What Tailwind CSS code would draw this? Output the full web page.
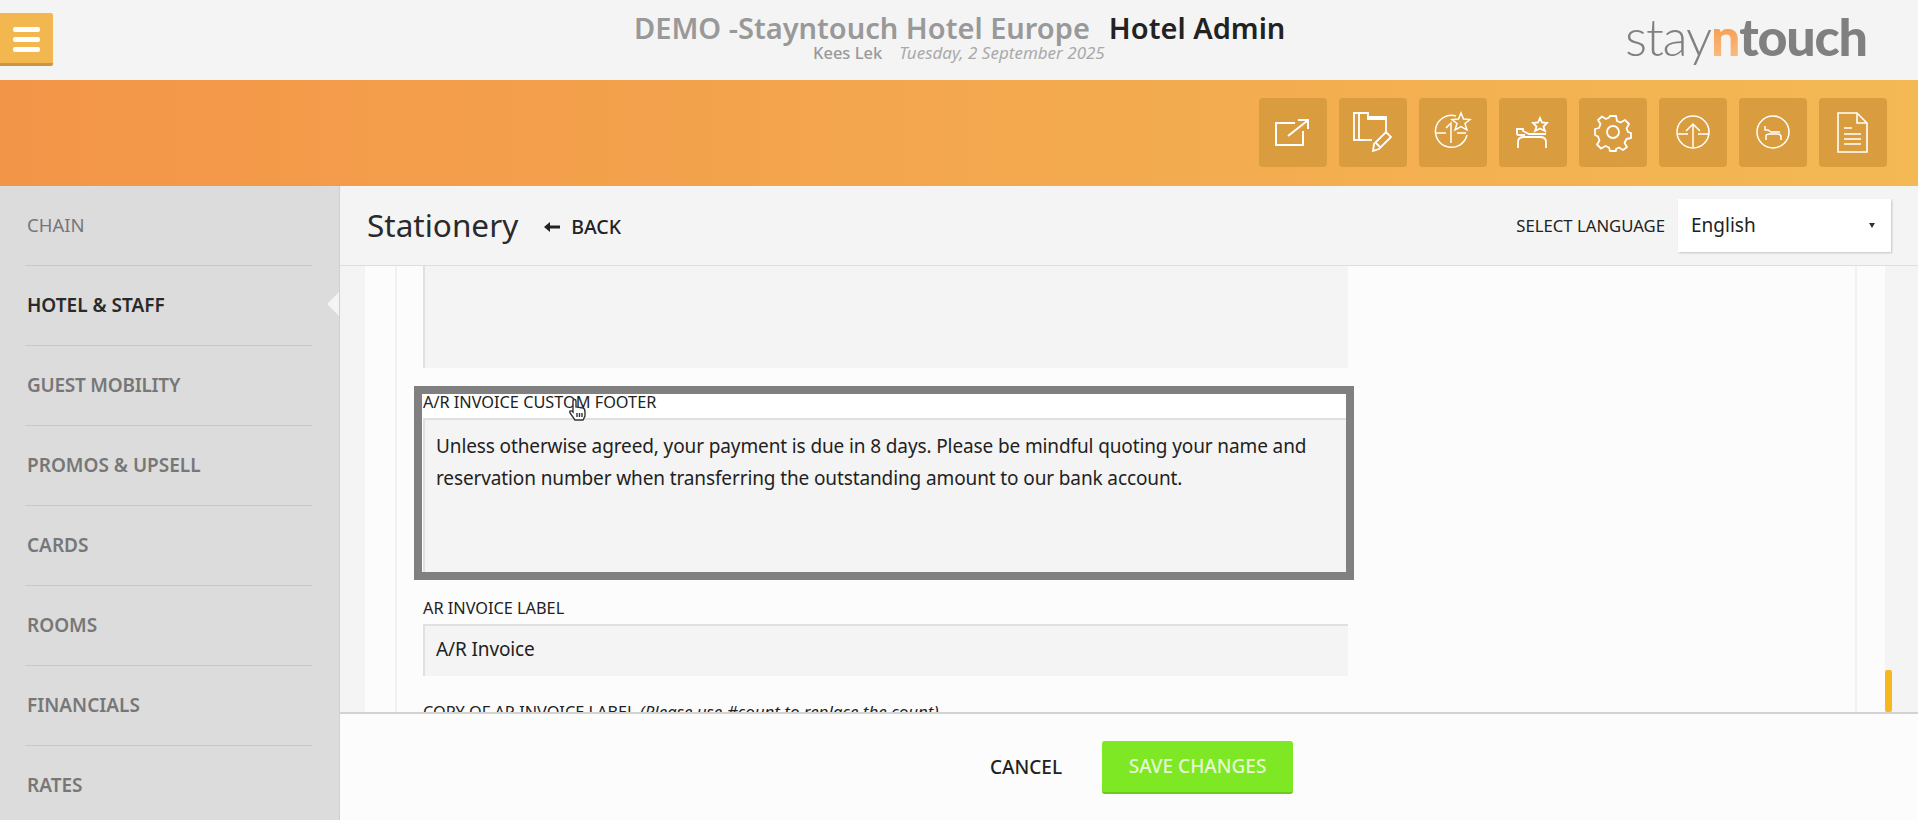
<!DOCTYPE html>
<html lang="en">
<head>
  <meta charset="UTF-8">
  <title>Stationery</title>
  <script src="https://cdn.jsdelivr.net/npm/@tailwindcss/browser@4"></script>
</head>
<body class="bg-white overflow-hidden font-['Noto_Sans',sans-serif] text-[#222]">
<div class="relative w-[1918px] h-[820px] flex flex-col overflow-hidden">

  <!-- top header -->
  <header class="relative h-[80px] shrink-0 bg-[#f4f4f4] flex">
    <div class="mt-[13px] w-[53px] h-[53px] bg-[#f2b84f] border-b-[3px] border-[#c9973d] rounded-r-[2px] flex flex-col gap-[5px] pl-[13px] pt-[14px]">
      <span class="block w-[27px] h-[5px] bg-white rounded-[2px]"></span>
      <span class="block w-[27px] h-[5px] bg-white rounded-[2px]"></span>
      <span class="block w-[27px] h-[5px] bg-white rounded-[2px]"></span>
    </div>
    <div class="ml-[581px] w-[670px] flex flex-col">
      <div class="mt-[11px] h-[32px] flex items-center text-[29px] font-semibold leading-none whitespace-nowrap">
        <span class="text-[#999]">DEMO -Stayntouch Hotel Europe</span>
        <span class="ml-[19px] text-[#222]">Hotel Admin</span>
      </div>
      <div class="ml-[179px] flex items-center leading-[20px] whitespace-nowrap">
        <span class="text-[16.500px] font-medium text-[#999]">Kees Lek</span>
        <span class="ml-[17px] text-[17px] italic text-[#aaa]">Tuesday, 2 September 2025</span>
      </div>
    </div>
    <div class="ml-[321px] mt-[5px] h-[62px] flex items-baseline font-['Lato',sans-serif] text-[52px] leading-[62px] text-[#808080] tracking-[-1.200px] whitespace-nowrap">
      <span class="font-light">stay</span><span class="font-black bg-gradient-to-b from-[#f58a1f] to-[#f8c48e] bg-clip-text text-transparent">n</span><span class="font-black">touch</span>
    </div>
  </header>

  <!-- orange bar with shortcut icons -->
  <div class="h-[106px] shrink-0 bg-gradient-to-r from-[#f39548] to-[#f3b954] flex justify-end items-start pt-[18px] pr-[31px] gap-[12px]">
    <a class="w-[68px] h-[69px] rounded-[4px] bg-[#d99c3e] block">
      <svg viewBox="0 0 68 69" class="w-full h-full" fill="none" stroke="white" stroke-width="2">
        <path d="M36 25H17V47H44V33"/><path d="M29 38L48 23"/><path d="M39 22H49V31"/>
      </svg>
    </a>
    <a class="w-[68px] h-[69px] rounded-[4px] bg-[#d99c3e] block">
      <svg viewBox="0 0 68 69" class="w-full h-full" fill="none" stroke="white" stroke-width="1.800">
        <path d="M20 15H15V42H25"/><path d="M20 42V15H29V19H47V36"/><path d="M29 19V21H47"/>
        <path d="M20 42H33"/>
        <path d="M35 46L47 34L52 39L40 51L34 53Z"/><path d="M37 45L41 49"/>
      </svg>
    </a>
    <a class="w-[68px] h-[69px] rounded-[4px] bg-[#d99c3e] block">
      <svg viewBox="0 0 68 69" class="w-full h-full" fill="none" stroke="white" stroke-width="1.500">
        <path d="M37 18A16 16 0 1 0 48 37"/>
        <path d="M17 35H27M38 35H47"/><path d="M32 45V25L27 30"/>
        <path d="M42 15L44.500 21L51 21.500L46 25.500L48 32L42 28.500L36 32L38 25.500L33 21.500L39.500 21Z"/>
      </svg>
    </a>
    <a class="w-[68px] h-[69px] rounded-[4px] bg-[#d99c3e] block">
      <svg viewBox="0 0 68 69" class="w-full h-full" fill="none" stroke="white" stroke-width="1.800">
        <path d="M18 37V31H24V33L30 36H47"/>
        <path d="M18 37H26"/>
        <path d="M19 50V44C19 40 22 39 25 39H41C45 39 47 41 47 44V50"/>
        <path d="M41 20L43 24.500L48 25L44.500 28.500L46 33L41 30.500L36 33L37.500 28.500L34 25L39 24.500Z"/>
      </svg>
    </a>
    <a class="w-[68px] h-[69px] rounded-[4px] bg-[#d99c3e] block">
      <svg viewBox="0 0 68 69" class="w-full h-full" fill="none" stroke="white" stroke-width="1.800" stroke-linejoin="round">
        <circle cx="34" cy="34" r="6"/>
        <path d="M31 18H37L38 23L41.500 24.500L46 22L50 26L47.500 30.500L49 34L52 35V40L47.500 41L45.500 45L48 49L44 52L40 49.500L37 51V53H31L30 49.500L26.500 48L22 50.500L18 46.500L20.500 42.500L19 38.500L16 37V31L20 30L21.500 26L19 22L23 18.500L27 21L30 19.500Z"/>
      </svg>
    </a>
    <a class="w-[68px] h-[69px] rounded-[4px] bg-[#d99c3e] block">
      <svg viewBox="0 0 68 69" class="w-full h-full" fill="none" stroke="white" stroke-width="1.500">
        <circle cx="34" cy="34" r="16"/>
        <path d="M18 36H29M39 36H50"/><path d="M34 49V26"/><path d="M27 33L34 26L41 33"/>
      </svg>
    </a>
    <a class="w-[68px] h-[69px] rounded-[4px] bg-[#d99c3e] block">
      <svg viewBox="0 0 68 69" class="w-full h-full" fill="none" stroke="white" stroke-width="1.500">
        <circle cx="34" cy="34" r="16"/>
        <path d="M26 28V32H29L32 34H41"/>
        <path d="M27 42V38C27 36 29 36 31 36H38C41 36 42 37 42 39V42"/>
      </svg>
    </a>
    <a class="w-[68px] h-[69px] rounded-[4px] bg-[#d99c3e] block">
      <svg viewBox="0 0 68 69" class="w-full h-full" fill="none" stroke="white" stroke-width="1.600">
        <path d="M19 15H38L48 25V54H19Z"/><path d="M38 15V25H48"/>
        <path d="M25 30H33M25 36H42M25 41H42M25 46H42"/>
      </svg>
    </a>
  </div>

  <div class="flex flex-1 min-h-0">
    <!-- left menu -->
    <nav class="relative w-[340px] shrink-0 bg-[#dcdcdc] border-r border-[#cfcfcf] overflow-hidden text-[19px] font-semibold text-[#777]">
      <div class="ml-[25px] w-[287px] h-[80px] pl-[2px] pb-[1px] flex items-center border-b border-[#c8c8c8] text-[18.500px] font-normal">CHAIN</div>
      <div class="ml-[25px] w-[287px] h-[80px] pl-[2px] pb-[1px] flex items-center border-b border-[#c8c8c8] text-[#2a2a2a]">HOTEL &amp; STAFF</div>
      <div class="ml-[25px] w-[287px] h-[80px] pl-[2px] pb-[1px] flex items-center border-b border-[#c8c8c8] tracking-[-0.250px]">GUEST MOBILITY</div>
      <div class="ml-[25px] w-[287px] h-[80px] pl-[2px] pb-[1px] flex items-center border-b border-[#c8c8c8]">PROMOS &amp; UPSELL</div>
      <div class="ml-[25px] w-[287px] h-[80px] pl-[2px] pb-[1px] flex items-center border-b border-[#c8c8c8]">CARDS</div>
      <div class="ml-[25px] w-[287px] h-[80px] pl-[2px] pb-[1px] flex items-center border-b border-[#c8c8c8]">ROOMS</div>
      <div class="ml-[25px] w-[287px] h-[80px] pl-[2px] pb-[1px] flex items-center border-b border-[#c8c8c8]">FINANCIALS</div>
      <div class="ml-[25px] w-[287px] h-[80px] pl-[2px] pb-[1px] flex items-center border-b border-[#c8c8c8]">RATES</div>
      <!-- active item notch -->
      <div class="absolute top-[105px] right-[-1px] w-0 h-0 border-y-[13px] border-y-transparent border-r-[13px] border-r-[#f4f4f4]"></div>
    </nav>

    <main class="flex-1 min-w-0 flex flex-col">
      <!-- title row -->
      <div class="h-[80px] shrink-0 bg-[#f4f4f4] border-b border-[#dedede] flex items-center pl-[27px] pr-[27px]">
        <h1 class="text-[31.500px] leading-none text-[#2a2a2a] mt-[-1px]">Stationery</h1>
        <a class="ml-[26px] mt-[3px] flex items-center text-[19.500px] font-medium text-[#222]">
          <svg viewBox="0 0 16 12" class="w-[16px] h-[12px] mr-[11px]" fill="#222"><path d="M0 6L6 1V4.500H16V7.500H6V11Z"/></svg>
          BACK
        </a>
        <div class="ml-auto flex items-center">
          <span class="text-[16.700px] text-[#222] mr-[13px]">SELECT LANGUAGE</span>
          <div class="w-[213px] h-[53px] bg-white shadow-[1px_1px_2px_rgba(0,0,0,0.2)] flex items-center pl-[13px] pr-[16px] text-[19px] text-[#222]">
            English
            <span class="ml-auto w-0 h-0 border-x-[3.500px] border-x-transparent border-t-[5px] border-t-[#333]"></span>
          </div>
        </div>
      </div>

      <!-- scrolling form -->
      <div class="relative flex-1 min-h-0 flex overflow-hidden bg-[#f4f4f4]">
        <div class="ml-[25px] w-[1520px] bg-[#fcfcfc] pl-[30px] pr-[28px]">
          <div class="h-full border-x-2 border-[#f1f1f1] pl-[26px] text-[#222]">
            <div class="w-[925px] h-[102px] bg-[#f4f4f4] border-l-2 border-[#e0e0e0]"></div>

            <div class="mt-[18px] ml-[-9px] w-[940px] h-[194px] border-8 border-[#808080] bg-white pl-[1px]">
              <label class="block h-[24px] text-[16.300px] leading-[17px]">A/R INVOICE CUSTOM FOOTER</label>
              <div class="h-[154px] bg-[#f4f4f4] border-l-2 border-t-2 border-[#e0e0e0] pl-[11px] pt-[10px] text-[19px] leading-[32px] tracking-[-0.120px]">Unless otherwise agreed, your payment is due in 8 days. Please be mindful quoting your name and<br>reservation number when transferring the outstanding amount to our bank account.</div>
            </div>

            <label class="block mt-[16px] h-[24px] text-[16.300px] leading-[24px]">AR INVOICE LABEL</label>
            <div class="mt-[4px] w-[925px] h-[52px] bg-[#f4f4f4] border-l-2 border-t-2 border-[#e0e0e0] pl-[11px] pb-[3px] flex items-center text-[19px] tracking-[-0.120px]">A/R Invoice</div>

            <label class="block mt-[24px] h-[24px] text-[16.300px] leading-[24px] whitespace-nowrap">COPY OF AR INVOICE LABEL <em class="text-[16.900px]">(Please use #count to replace the count)</em></label>
          </div>
        </div>
        <div class="absolute right-[26px] bottom-0 w-[7px] h-[42px] rounded-[2px] bg-[#f7b71e]"></div>
      </div>

      <!-- footer buttons -->
      <div class="h-[108px] shrink-0 bg-[#fcfcfc] border-t-2 border-[#d2d2d2] flex items-center pl-[650px] gap-[40px]">
        <a class="text-[19px] font-medium text-[#222]">CANCEL</a>
        <button class="w-[191px] h-[53px] rounded-[3px] bg-[#7de823] border-b-2 border-[#6cc91f] text-[19px] font-medium text-[#e6f8d2]">SAVE CHANGES</button>
      </div>
    </main>
  </div>

  <!-- mouse pointer -->
  <svg viewBox="0 0 20 24" class="absolute left-[567px] top-[398px] w-[20px] h-[24px]" fill="white" stroke="#333" stroke-width="1.400">
    <path d="M6 11V3C6 1 9 1 9 3V9L16 10C18 10.500 18 12 18 14V18L16 22H8L3 15C2 13 4 12 6 14Z"/>
    <path d="M10 15V19M12.500 15V19M15 15V19"/>
  </svg>
</div>
</body>
</html>
